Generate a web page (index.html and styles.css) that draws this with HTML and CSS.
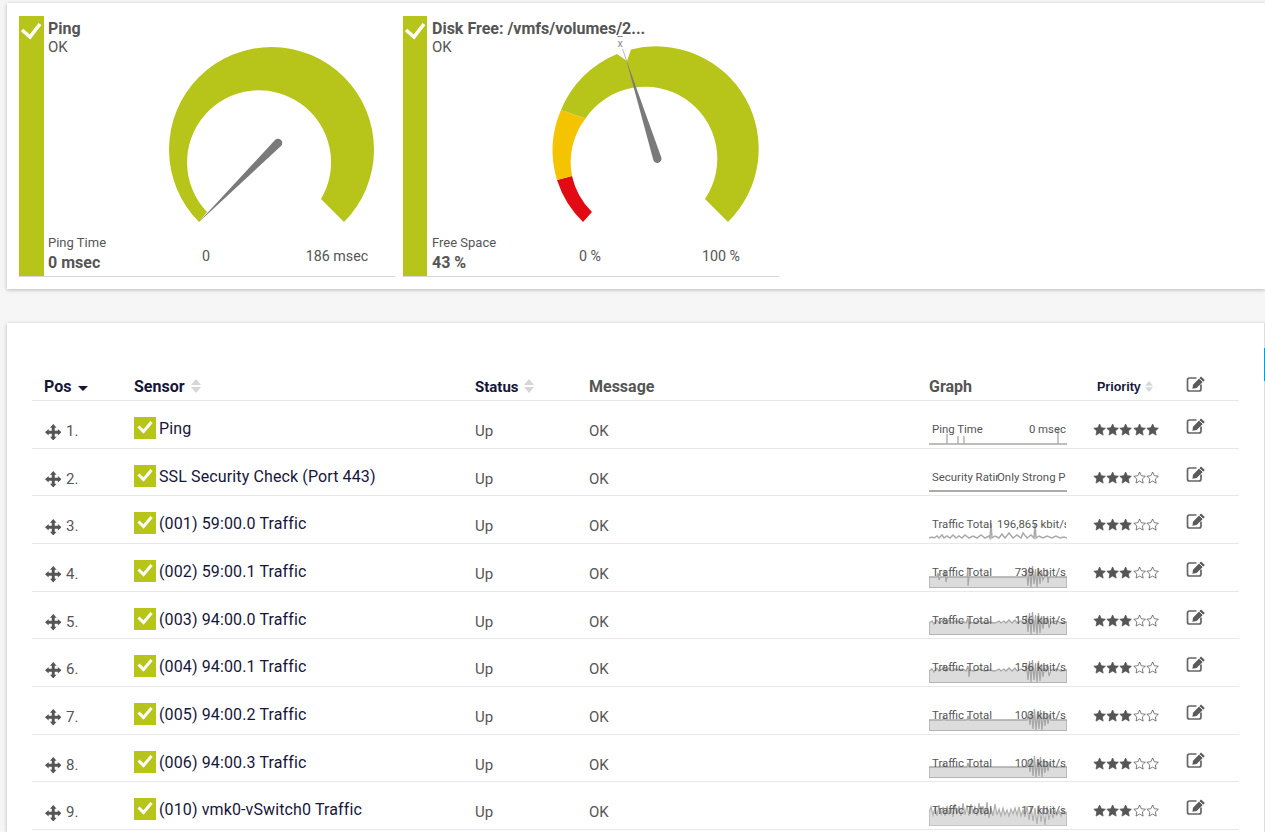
FILE: index.html
```html
<!DOCTYPE html>
<html lang="en">
<head>
  <meta charset="UTF-8" />
  <meta name="viewport" content="width=device-width, initial-scale=1.0"/>
  <title>Device Overview</title>
  <link rel="stylesheet" href="styles.css">
</head>
<body>

  <!-- Shared icons -->
  <svg class="defs" aria-hidden="true">
    <symbol id="i-move" viewBox="0 0 18 18">
      <path d="M9 0L12.6 4H10.6V7.4H14V5.4L18 9L14 12.6V10.6H10.6V14H12.6L9 18L5.4 14H7.4V10.6H4V12.6L0 9L4 5.4V7.4H7.4V4H5.4Z"/>
    </symbol>
    <symbol id="i-check" viewBox="0 0 22 22">
      <path class="check-stroke" d="M4.5 9.5L9.5 14.5L17.5 5"/>
    </symbol>
    <symbol id="i-star" viewBox="0 0 24 24">
      <path d="M12 1.8l3.1 6.8 7.4.9-5.5 5.1 1.5 7.4L12 18.3 5.5 22l1.5-7.4L1.5 9.5l7.4-.9z"/>
    </symbol>
    <symbol id="i-edit" viewBox="0 0 20 18">
      <path class="edit-box" d="M10.5 3H3.5A2 2 0 0 0 1.5 5V14A2 2 0 0 0 3.5 16H13A2 2 0 0 0 15 14V9.5"/>
      <path d="M7 9.8L15 1.6L18.8 5L10.6 13L6.4 13.8Z"/>
      <path class="edit-notch" d="M13.2 3.4L17 6.8"/>
    </symbol>
    <symbol id="i-sort" viewBox="0 0 10 14">
      <path d="M5 0L10 6H0ZM0 8H10L5 14Z"/>
    </symbol>

    <!-- Sparklines, 138 x 26 -->
    <symbol id="g-ping" viewBox="0 0 138 26">
      <path class="spark-line" d="M0 25H138M18 25V15M29 25V17M35 25V17M129 25V10"/>
    </symbol>
    <symbol id="g-flat" viewBox="0 0 138 26">
      <path class="spark-line" d="M0 26V15H14L15 12L16 15H38L39 11L40 15H98L99.5 8L101 20L102.5 6L104 24L105.5 4L107 25L108.5 7L110 24L111.5 5L113 25L114.5 8L116 21L117.5 9L119 19L120.5 11L122 15H138V26Z"/>
    </symbol>
    <symbol id="g-first" viewBox="0 0 138 26">
      <path class="spark-line" d="M0 26V15H8L9 11L10 18L11 15H15L16 8L17 20L18 15H38L39 5V24L40 15H96L97.5 8L99 24L100.5 5L102 25L103.5 4L105 22L106.5 7L108 25L109.5 6L111 22L112.5 9L114 18L115.5 14L117 15L118 7L119 21L120 15H138V26Z"/>
    </symbol>
    <symbol id="g-noisy" viewBox="0 0 138 26">
      <path class="spark-line" d="M0 26V14L3 12L5 15L8 11L10 14L13 12L15 9L17 14L20 11L23 14L26 12L30 13L34 12L37 14L39 9L40 20L41 13L45 14L50 12L56 14L60 13L66 14L70 12L72 14L75 12L77 14L80 11L83 14L86 11L88 14L92 12L96 14L97.5 6L99 23L100.5 4L102 25L103.5 3L105 23L106.5 6L108 25L109.5 4L111 24L112.5 7L114 20L115.5 10L117 15L118.5 7L120 19L122 13L128 12L132 14L138 13V26Z"/>
    </symbol>
    <symbol id="g-dense" viewBox="0 0 138 26">
      <path class="spark-dense" d="M0 26V12L2 7L4 15L6 8L8 16L10 5L12 15L14 7L16 16L18 6L20 15L22 8L24 17L26 4L28 14L30 6L32 16L34 3L36 15L38 5L40 16L42 4L44 14L46 6L48 16L50 3L52 15L54 6L56 16L58 2L60 18L62 8L64 16L66 4L68 15L70 9L72 16L74 8L76 15L78 10L80 16L82 9L84 14L86 8L88 15L90 7L92 16L94 10L96 17L98 6L100 20L102 6L104 21L106 8L108 24L110 5L112 22L114 8L116 25L118 6L120 20L122 9L124 18L126 10L128 15L130 11L132 16L134 10L136 14L138 12V26Z"/>
    </symbol>
    <symbol id="g-thin" viewBox="0 0 138 26">
      <path class="spark-thin" d="M0 24L3 23L5 24L8 22L10 24L13 21L15 24L18 22L21 24L24 21L27 24L30 22L33 24L36 21L40 24L44 22L48 24L52 21L56 24L60 22L61 24L62 9L63 24L66 22L70 24L73 20L76 24L80 19L84 24L88 21L92 24L94 19L98 24L102 21L105 24L106 9L107 24L110 22L114 24L118 22L123 24L127 22L131 24L135 23L138 24"/>
    </symbol>
  </svg>

  <main class="page">

    <!-- Top tiles with gauges -->
    <section class="card card-gauges">
      <div class="tile">
        <div class="tile-bar">
          <svg viewBox="0 0 25 25"><path d="M3 14L11 21L21 8"/></svg>
        </div>
        <div class="tile-info">
          <div>
            <div class="tile-name">Ping</div>
            <div class="tile-msg">OK</div>
          </div>
          <div>
            <div class="tile-label">Ping Time</div>
            <div class="tile-value">0 msec</div>
          </div>
        </div>
        <div class="gauge">
          <svg viewBox="0 0 231 190" width="231" height="190">
            <path class="seg-green" d="M43 182A102.5 102.5 0 1 1 188 182L165 159A72 72 0 1 0 51 172Z"/>
            <path class="needle" d="M42.5 182.5L119 100A4.2 4.2 0 0 1 125 106Z"/>
          </svg>
          <div class="gauge-scale"><span>0</span><span>186 msec</span></div>
        </div>
      </div>

      <div class="tile">
        <div class="tile-bar">
          <svg viewBox="0 0 25 25"><path d="M3 14L11 21L21 8"/></svg>
        </div>
        <div class="tile-info">
          <div>
            <div class="tile-name">Disk Free: /vmfs/volumes/2...</div>
            <div class="tile-msg">OK</div>
          </div>
          <div>
            <div class="tile-label">Free Space</div>
            <div class="tile-value">43 %</div>
          </div>
        </div>
        <div class="gauge">
          <svg viewBox="0 0 231 190" width="231" height="190">
            <path class="seg-red" d="M43 182A102.5 102.5 0 0 1 17 140L32 136A72 72 0 0 0 52 172Z"/>
            <path class="seg-yellow" d="M17 140A102.5 102.5 0 0 1 21 70L45.5 78.5A72 72 0 0 0 32 136Z"/>
            <path class="seg-green" d="M21 70A102.5 102.5 0 0 1 77 14L87 21L91 9.5A102.5 102.5 0 0 1 188 182L165 159A72 72 0 0 0 45.5 78.5Z"/>
            <path class="needle-avg" d="M82.5 9L87 22"/>
            <text class="avg-mark" x="80" y="7">x</text>
            <path class="needle" d="M86 19L113.3 120A4.2 4.2 0 0 0 121.3 117.4Z"/>
          </svg>
          <div class="gauge-scale"><span>0 %</span><span>100 %</span></div>
        </div>
      </div>
    </section>

    <!-- Sensor list -->
    <section class="card card-table">
      <span class="edge-mark"></span>
      <table class="sensors">
        <colgroup>
          <col class="c-pos"><col class="c-sensor"><col class="c-status"><col class="c-msg"><col class="c-graph"><col class="c-prio"><col class="c-edit">
        </colgroup>
        <thead>
          <tr>
            <th>Pos <span class="caret"></span></th>
            <th>Sensor <svg class="sort"><use href="#i-sort"/></svg></th>
            <th class="th-status">Status <svg class="sort"><use href="#i-sort"/></svg></th>
            <th class="muted">Message</th>
            <th class="muted">Graph</th>
            <th class="th-prio">Priority <svg class="sort"><use href="#i-sort"/></svg></th>
            <th class="th-edit"><svg class="edit"><use href="#i-edit"/></svg></th>
          </tr>
        </thead>
        <tbody>
          <tr>
            <td class="pos"><svg class="move"><use href="#i-move"/></svg>1.</td>
            <td class="sensor"><span class="ok"><svg><use href="#i-check"/></svg></span>Ping</td>
            <td>Up</td><td>OK</td>
            <td class="graph"><svg><use href="#g-ping"/></svg><div class="graph-text"><span>Ping Time</span><span>0 msec</span></div></td>
            <td class="stars"><svg class="on"><use href="#i-star"/></svg><svg class="on"><use href="#i-star"/></svg><svg class="on"><use href="#i-star"/></svg><svg class="on"><use href="#i-star"/></svg><svg class="on"><use href="#i-star"/></svg></td>
            <td class="act"><svg class="edit"><use href="#i-edit"/></svg></td>
          </tr>
          <tr>
            <td class="pos"><svg class="move"><use href="#i-move"/></svg>2.</td>
            <td class="sensor"><span class="ok"><svg><use href="#i-check"/></svg></span>SSL Security Check (Port 443)</td>
            <td>Up</td><td>OK</td>
            <td class="graph"><div class="graph-line"></div><div class="graph-text"><span class="clip">Security Ratir</span><span class="clip-right">Only Strong Pr</span></div></td>
            <td class="stars"><svg class="on"><use href="#i-star"/></svg><svg class="on"><use href="#i-star"/></svg><svg class="on"><use href="#i-star"/></svg><svg><use href="#i-star"/></svg><svg><use href="#i-star"/></svg></td>
            <td class="act"><svg class="edit"><use href="#i-edit"/></svg></td>
          </tr>
          <tr>
            <td class="pos"><svg class="move"><use href="#i-move"/></svg>3.</td>
            <td class="sensor"><span class="ok"><svg><use href="#i-check"/></svg></span>(001) 59:00.0 Traffic</td>
            <td>Up</td><td>OK</td>
            <td class="graph"><svg><use href="#g-thin"/></svg><div class="graph-text"><span>Traffic Total</span><span class="clip-right">196,865 kbit/s</span></div></td>
            <td class="stars"><svg class="on"><use href="#i-star"/></svg><svg class="on"><use href="#i-star"/></svg><svg class="on"><use href="#i-star"/></svg><svg><use href="#i-star"/></svg><svg><use href="#i-star"/></svg></td>
            <td class="act"><svg class="edit"><use href="#i-edit"/></svg></td>
          </tr>
          <tr>
            <td class="pos"><svg class="move"><use href="#i-move"/></svg>4.</td>
            <td class="sensor"><span class="ok"><svg><use href="#i-check"/></svg></span>(002) 59:00.1 Traffic</td>
            <td>Up</td><td>OK</td>
            <td class="graph"><svg><use href="#g-first"/></svg><div class="graph-text"><span>Traffic Total</span><span>739 kbit/s</span></div></td>
            <td class="stars"><svg class="on"><use href="#i-star"/></svg><svg class="on"><use href="#i-star"/></svg><svg class="on"><use href="#i-star"/></svg><svg><use href="#i-star"/></svg><svg><use href="#i-star"/></svg></td>
            <td class="act"><svg class="edit"><use href="#i-edit"/></svg></td>
          </tr>
          <tr>
            <td class="pos"><svg class="move"><use href="#i-move"/></svg>5.</td>
            <td class="sensor"><span class="ok"><svg><use href="#i-check"/></svg></span>(003) 94:00.0 Traffic</td>
            <td>Up</td><td>OK</td>
            <td class="graph"><svg><use href="#g-noisy"/></svg><div class="graph-text"><span>Traffic Total</span><span>156 kbit/s</span></div></td>
            <td class="stars"><svg class="on"><use href="#i-star"/></svg><svg class="on"><use href="#i-star"/></svg><svg class="on"><use href="#i-star"/></svg><svg><use href="#i-star"/></svg><svg><use href="#i-star"/></svg></td>
            <td class="act"><svg class="edit"><use href="#i-edit"/></svg></td>
          </tr>
          <tr>
            <td class="pos"><svg class="move"><use href="#i-move"/></svg>6.</td>
            <td class="sensor"><span class="ok"><svg><use href="#i-check"/></svg></span>(004) 94:00.1 Traffic</td>
            <td>Up</td><td>OK</td>
            <td class="graph"><svg><use href="#g-noisy"/></svg><div class="graph-text"><span>Traffic Total</span><span>156 kbit/s</span></div></td>
            <td class="stars"><svg class="on"><use href="#i-star"/></svg><svg class="on"><use href="#i-star"/></svg><svg class="on"><use href="#i-star"/></svg><svg><use href="#i-star"/></svg><svg><use href="#i-star"/></svg></td>
            <td class="act"><svg class="edit"><use href="#i-edit"/></svg></td>
          </tr>
          <tr>
            <td class="pos"><svg class="move"><use href="#i-move"/></svg>7.</td>
            <td class="sensor"><span class="ok"><svg><use href="#i-check"/></svg></span>(005) 94:00.2 Traffic</td>
            <td>Up</td><td>OK</td>
            <td class="graph"><svg><use href="#g-flat"/></svg><div class="graph-text"><span>Traffic Total</span><span>103 kbit/s</span></div></td>
            <td class="stars"><svg class="on"><use href="#i-star"/></svg><svg class="on"><use href="#i-star"/></svg><svg class="on"><use href="#i-star"/></svg><svg><use href="#i-star"/></svg><svg><use href="#i-star"/></svg></td>
            <td class="act"><svg class="edit"><use href="#i-edit"/></svg></td>
          </tr>
          <tr>
            <td class="pos"><svg class="move"><use href="#i-move"/></svg>8.</td>
            <td class="sensor"><span class="ok"><svg><use href="#i-check"/></svg></span>(006) 94:00.3 Traffic</td>
            <td>Up</td><td>OK</td>
            <td class="graph"><svg><use href="#g-flat"/></svg><div class="graph-text"><span>Traffic Total</span><span>102 kbit/s</span></div></td>
            <td class="stars"><svg class="on"><use href="#i-star"/></svg><svg class="on"><use href="#i-star"/></svg><svg class="on"><use href="#i-star"/></svg><svg><use href="#i-star"/></svg><svg><use href="#i-star"/></svg></td>
            <td class="act"><svg class="edit"><use href="#i-edit"/></svg></td>
          </tr>
          <tr>
            <td class="pos"><svg class="move"><use href="#i-move"/></svg>9.</td>
            <td class="sensor"><span class="ok"><svg><use href="#i-check"/></svg></span>(010) vmk0-vSwitch0 Traffic</td>
            <td>Up</td><td>OK</td>
            <td class="graph"><svg><use href="#g-dense"/></svg><div class="graph-text"><span>Traffic Total</span><span>17 kbit/s</span></div></td>
            <td class="stars"><svg class="on"><use href="#i-star"/></svg><svg class="on"><use href="#i-star"/></svg><svg class="on"><use href="#i-star"/></svg><svg><use href="#i-star"/></svg><svg><use href="#i-star"/></svg></td>
            <td class="act"><svg class="edit"><use href="#i-edit"/></svg></td>
          </tr>
        </tbody>
      </table>
    </section>
  </main>
</body>
</html>
```

FILE: styles.css
```css
html, body {
  margin: 0;
  height: 832px;
  overflow: hidden;
}

body {
  background: #f6f6f6;
  color: #555;
  font: 15px/20px Roboto, "Liberation Sans", sans-serif;
}

.defs {
  position: absolute;
  width: 0;
  height: 0;
}

.page {
  padding: 3px 0 0 7px;
}

.card {
  background: #fff;
  box-shadow: 0 1px 4px rgba(0, 0, 0, 0.25);
}

/* Gauges */
.card-gauges {
  display: flex;
  gap: 8px;
  height: 286px;
  padding: 13px 0 0 12px;
  box-sizing: border-box;
  margin-bottom: 34px;
}

.tile {
  position: relative;
  display: flex;
  width: 376px;
  height: 261px;
  box-sizing: border-box;
  border-bottom: 1px solid #d8d8d8;
}

.tile-bar {
  flex: none;
  width: 25px;
  background: #b7c41a;
}

.tile + .tile .tile-bar {
  width: 24px;
}

.tile-bar svg {
  display: block;
  width: 25px;
  height: 25px;
}

.tile-bar path {
  fill: none;
  stroke: #fff;
  stroke-width: 3.6;
}

.tile-info {
  display: flex;
  flex-direction: column;
  justify-content: space-between;
  padding: 4px 0 3px 4px;
  white-space: nowrap;
}

.tile + .tile .tile-info {
  padding-left: 5px;
}

.tile-name {
  font-size: 16px;
  font-weight: 700;
  line-height: 18px;
}

.tile-msg {
  line-height: 18px;
}

.tile-label {
  font-size: 13px;
  line-height: 20px;
}

.tile-value {
  font-size: 16px;
  font-weight: 700;
  line-height: 20px;
}

.gauge {
  position: absolute;
  left: 137px;
  top: 24px;
  width: 231px;
}

.gauge svg {
  display: block;
  overflow: visible;
}

.gauge-scale {
  display: flex;
  justify-content: space-between;
  margin-top: 17px;
  font-size: 14.25px;
  line-height: 18px;
}

.gauge-scale span {
  width: 100px;
  text-align: center;
}

.seg-green { fill: #b7c41a; }
.seg-yellow { fill: #f5c400; }
.seg-red { fill: #e30b13; }
.needle { fill: #7a7a7a; }

.needle-avg {
  fill: none;
  stroke: #bbb;
  stroke-width: 1;
}

.avg-mark {
  fill: #888;
  font-size: 10.5px;
  text-anchor: middle;
  text-decoration: overline;
}

/* Table */
.card-table {
  position: relative;
  height: 509px;
  padding: 51.5px 0 0 25px;
  box-sizing: border-box;
  border-right: 1px solid #ddd;
}

.edge-mark {
  position: absolute;
  right: -1px;
  top: 25px;
  width: 1px;
  height: 33px;
  background: #0f9bd0;
}

.sensors {
  table-layout: fixed;
  border-collapse: collapse;
  width: 1207px;
}

.c-pos { width: 90px; }
.c-sensor { width: 341px; }
.c-status { width: 114px; }
.c-msg { width: 340px; }
.c-graph { width: 168px; }
.c-prio { width: 89px; }
.c-edit { width: 65px; }

.sensors th {
  height: 26px;
  padding: 0 0 0 12px;
  border-bottom: 1px solid #e8e8e8;
  color: #16163a;
  font-size: 16px;
  font-weight: 700;
  line-height: 16px;
  text-align: left;
  white-space: nowrap;
  box-sizing: border-box;
  vertical-align: middle;
}

.sensors th.muted {
  color: #555;
}

.sensors th.th-status {
  font-size: 15px;
}

.sensors th.th-prio {
  font-family: "Liberation Sans", sans-serif;
  font-size: 12.5px;
}

.sensors th.th-edit {
  line-height: 0;
  vertical-align: top;
}

.th-edit .edit {
  display: block;
}

.sort {
  width: 10px;
  height: 14px;
  margin-left: 2px;
  fill: #d4d6da;
  vertical-align: -1px;
}

.th-prio .sort {
  width: 8px;
  height: 11px;
  margin-left: 1px;
  vertical-align: -1px;
}

.caret {
  display: inline-block;
  width: 0;
  height: 0;
  margin: 0 0 1px 3px;
  border: 5.5px solid transparent;
  border-top: 5px solid #16163a;
  border-bottom: 0;
}

.sensors td {
  height: 47.67px;
  padding: 20px 0 0 12px;
  border-bottom: 1px solid #e8e8e8;
  box-sizing: border-box;
  vertical-align: top;
  white-space: nowrap;
}

.move {
  width: 16.5px;
  height: 16.5px;
  margin: 0 5px -4px 0.5px;
  fill: #555;
}

.sensors td.sensor {
  padding-top: 16px;
  color: #16163a;
  font-size: 16px;
  letter-spacing: 0.12px;
  line-height: 24px;
}

.ok {
  display: inline-block;
  width: 22px;
  height: 22px;
  margin-right: 3px;
  background: #b7c41a;
  vertical-align: top;
}

.ok svg {
  display: block;
  width: 22px;
  height: 22px;
}

.check-stroke {
  fill: none;
  stroke: #fff;
  stroke-width: 3;
}

.sensors td.graph {
  position: relative;
  padding: 0;
}

.graph svg {
  position: absolute;
  left: 12px;
  bottom: 3px;
  width: 138px;
  height: 26px;
}

.graph-line {
  position: absolute;
  left: 12px;
  bottom: 3px;
  width: 138px;
  height: 2px;
  background: #aaa;
}

.graph-text {
  position: absolute;
  left: 15px;
  top: 20px;
  display: flex;
  justify-content: space-between;
  width: 134px;
  overflow: hidden;
  color: #555;
  font-size: 11.4px;
  line-height: 16px;
}

.clip {
  flex: none;
  width: 65px;
}

.clip-right {
  flex: none;
  margin-left: auto;
  width: 69px;
  overflow: hidden;
}

.spark-line {
  fill: #dcdcdc;
  stroke: #a8a8a8;
  stroke-width: 1.3;
}

.spark-dense {
  fill: #dcdcdc;
  stroke: #b0b0b0;
  stroke-width: 1.2;
}

.spark-thin {
  fill: none;
  stroke: #aaa;
  stroke-width: 1.5;
}

.sensors td.stars {
  padding: 22px 0 0 8px;
  line-height: 0;
}

.stars svg {
  width: 13.2px;
  height: 13.2px;
  fill: #fff;
  stroke: #555;
  stroke-width: 1.4;
}

.stars svg.on {
  fill: #555;
}

.edit {
  width: 20px;
  height: 18px;
  fill: #5a5a5a;
}

.edit-box {
  fill: none;
  stroke: #666;
  stroke-width: 1.7;
}

.edit-notch {
  fill: none;
  stroke: #fff;
  stroke-width: 1;
}

.sensors td.act {
  padding: 16px 0 0 12px;
  line-height: 0;
}
```
